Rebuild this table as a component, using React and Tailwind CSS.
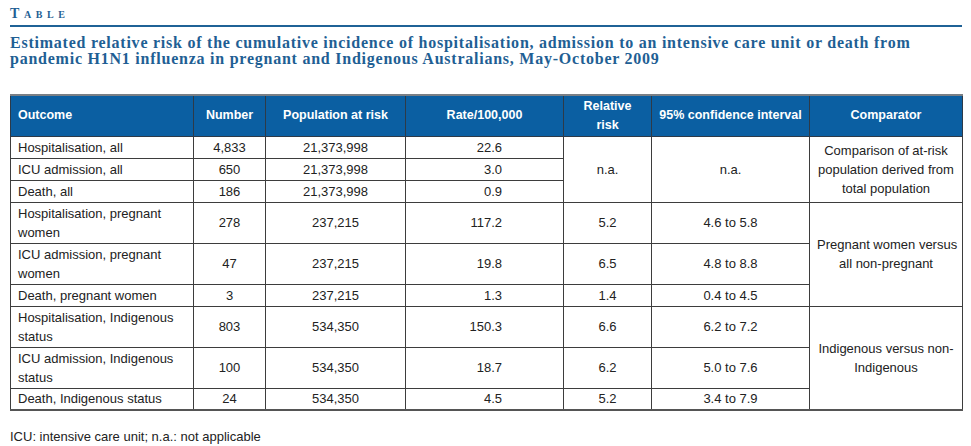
const ROWS = [
  { outcome: 'Hospitalisation, all', number: '4,833', pop: '21,373,998', rate: '22.6', tall: false },
  { outcome: 'ICU admission, all', number: '650', pop: '21,373,998', rate: '3.0', tall: false },
  { outcome: 'Death, all', number: '186', pop: '21,373,998', rate: '0.9', tall: false },
  { outcome: 'Hospitalisation, pregnant women', number: '278', pop: '237,215', rate: '117.2', rr: '5.2', ci: '4.6 to 5.8', tall: true },
  { outcome: 'ICU admission, pregnant women', number: '47', pop: '237,215', rate: '19.8', rr: '6.5', ci: '4.8 to 8.8', tall: true },
  { outcome: 'Death, pregnant women', number: '3', pop: '237,215', rate: '1.3', rr: '1.4', ci: '0.4 to 4.5', tall: false },
  { outcome: 'Hospitalisation, Indigenous status', number: '803', pop: '534,350', rate: '150.3', rr: '6.6', ci: '6.2 to 7.2', tall: true },
  { outcome: 'ICU admission, Indigenous status', number: '100', pop: '534,350', rate: '18.7', rr: '6.2', ci: '5.0 to 7.6', tall: true },
  { outcome: 'Death, Indigenous status', number: '24', pop: '534,350', rate: '4.5', rr: '5.2', ci: '3.4 to 7.9', tall: false },
]

const COMPARATORS = {
  0: ['Comparison of at-risk', 'population derived from', 'total population'],
  3: ['Pregnant women versus', 'all non-pregnant'],
  6: ['Indigenous versus non-', 'Indigenous'],
}

const td = 'border border-[#3d3d3d] px-[7px] py-0 leading-[19px] align-middle'
const th = 'border border-[#2d3a48] px-[7px] py-0 leading-[19px] align-middle font-bold text-white text-[12.5px] whitespace-nowrap'

function App() {
  return (
    <div className="w-[971px] h-[446px] bg-white px-[10px] pt-[6px] text-[#222]">
      <div className="font-['Liberation_Serif',serif] font-bold text-[14px] leading-[16px] tracking-[4.6px] text-[#1f5f94] [font-variant:small-caps]">
        Table
      </div>
      <div className="mt-[3px] w-[952px] h-[2px] bg-[#1f6296]" />
      <h1 className="mt-[8px] w-[952px] whitespace-nowrap font-['Liberation_Serif',serif] font-bold text-[16px] leading-[16px] tracking-[0.76px] text-[#1f5f94]">
        Estimated relative risk of the cumulative incidence of hospitalisation, admission to an intensive care unit or death from
        <br />
        pandemic H1N1 influenza in pregnant and Indigenous Australians, May-October 2009
      </h1>

      <table className="mt-[27px] w-[952px] table-fixed border-collapse border-t-2 border-t-[#7a7f85] border-b-2 border-b-[#555] font-['Liberation_Sans',sans-serif] text-[13px]">
        <colgroup>
          <col className="w-[183px]" />
          <col className="w-[72px]" />
          <col className="w-[140px]" />
          <col className="w-[158px]" />
          <col className="w-[88px]" />
          <col className="w-[158px]" />
          <col className="w-[153px]" />
        </colgroup>
        <thead>
          <tr className="h-[41px] bg-[#0b5fa2]">
            <th className={`${th} text-left`}>Outcome</th>
            <th className={`${th} text-center`}>Number</th>
            <th className={`${th} text-center`}>Population at risk</th>
            <th className={`${th} text-center`}>Rate/100,000</th>
            <th className={`${th} text-center`}>Relative<br />risk</th>
            <th className={`${th} text-center`}>95% confidence interval</th>
            <th className={`${th} text-center`}>Comparator</th>
          </tr>
        </thead>
        <tbody>
          {ROWS.map((r, i) => (
            <tr key={r.outcome} className={r.tall ? 'h-[41px]' : 'h-[22px]'}>
              <td className={`${td} text-left`}>{r.outcome}</td>
              <td className={`${td} text-center`}>{r.number}</td>
              <td className={`${td} text-center`}>{r.pop}</td>
              <td className={`${td} text-right pr-[61px]`}>{r.rate}</td>
              {i === 0 && (
                <>
                  <td rowSpan={3} className={`${td} text-center`}>n.a.</td>
                  <td rowSpan={3} className={`${td} text-center`}>n.a.</td>
                </>
              )}
              {i >= 3 && (
                <>
                  <td className={`${td} text-center`}>{r.rr}</td>
                  <td className={`${td} text-center`}>{r.ci}</td>
                </>
              )}
              {COMPARATORS[i] && (
                <td rowSpan={3} className={`${td} text-center whitespace-nowrap px-[2px]`}>
                  {COMPARATORS[i].map((line) => (
                    <div key={line}>{line}</div>
                  ))}
                </td>
              )}
            </tr>
          ))}
        </tbody>
      </table>

      <p className="mt-[18px] font-['Liberation_Sans',sans-serif] text-[13px] leading-[16px]">
        ICU: intensive care unit; n.a.: not applicable
      </p>
    </div>
  )
}

export default App
